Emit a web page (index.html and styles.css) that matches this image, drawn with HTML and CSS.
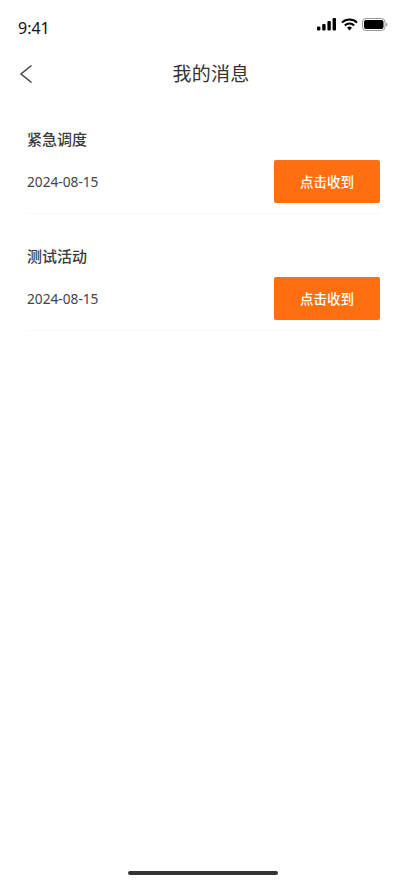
FILE: index.html
```html
<!DOCTYPE html>
<html lang="zh-CN">

<head>
    <meta charset="UTF-8">
    <meta name="viewport" content="width=device-width, initial-scale=1.0">
    <title>我的消息</title>

    <link rel="stylesheet" href="styles.css">
</head>

<body>
    <div class="page">
        <div class="status">
            <span class="time">9:41</span>
            <div class="status-icons">
                <svg width="20" height="13" viewBox="0 0 20 13">
                    <rect x="0" y="8.5" width="3.4" height="4" rx="1" fill="#000" />
                    <rect x="5.2" y="6" width="3.4" height="6.5" rx="1" fill="#000" />
                    <rect x="10.4" y="3" width="3.4" height="9.500" rx="1" fill="#000" />
                    <rect x="15.6" y="0" width="3.4" height="12.500" rx="1" fill="#000" />
                </svg>
                <svg width="17" height="13" viewBox="0 0 17 13">
                    <path d="M1 4.600a10.800 10.800 0 0 1 15 0" fill="none" stroke="#000" stroke-width="2" />
                    <path d="M3.800 7.500a6.800 6.800 0 0 1 9.400 0" fill="none" stroke="#000" stroke-width="2" />
                    <path d="M6 9.700a3.500 3.500 0 0 1 5 0L8.500 12.500z" fill="#000" />
                </svg>
                <svg width="26" height="13" viewBox="0 0 26 13">
                    <rect x="0.500" y="0.500" width="22.500" height="12" rx="3.500" fill="none" stroke="#999" />
                    <rect x="2" y="2" width="19.500" height="9" rx="2" fill="#000" />
                    <path d="M24 4.500c1 .3 1.500 1 1.500 2s-.5 1.700-1.500 2z" fill="#aaa" />
                </svg>
            </div>
        </div>

        <div class="nav">
            <svg class="back" width="14" height="20" viewBox="0 0 14 20">
                <path d="M12.500 1.500L2 10l10.500 8.500" fill="none" stroke="#444" stroke-width="1.500" />
            </svg>
            <h1 class="nav-title">我的消息</h1>
        </div>

        <ul class="list">
            <li class="item">
                <div class="item-title">紧急调度</div>
                <div class="item-row">
                    <span class="item-date">2024-08-15</span>
                    <button class="btn">点击收到</button>
                </div>
            </li>
            <li class="item">
                <div class="item-title">测试活动</div>
                <div class="item-row">
                    <span class="item-date">2024-08-15</span>
                    <button class="btn">点击收到</button>
                </div>
            </li>
        </ul>

        <div class="home-bar"></div>
    </div>
</body>

</html>
```

FILE: styles.css
```css
* {
    margin: 0;
    padding: 0;
    list-style: none;
    box-sizing: border-box;
}

body {
    background: #fff;
    font-family: "Noto Sans", "Noto Sans CJK SC", sans-serif;
}

.page {
    display: flex;
    flex-direction: column;
    height: 883px;
}

.status {
    display: flex;
    justify-content: space-between;
    align-items: center;
    height: 28px;
    margin-top: 14px;
    padding: 0 18px 0 18px;
}

.time {
    font-size: 16px;
    color: #111;
    line-height: 28px;
}

.status-icons {
    display: flex;
    align-items: center;
    gap: 4px;
    margin-bottom: 7px;
}

.nav {
    position: relative;
    display: flex;
    justify-content: center;
    align-items: center;
    height: 38px;
    margin-top: 12px;
    padding: 0 0 2px 16px;
}

.back {
    position: absolute;
    left: 19px;
    top: 10px;
}

.nav-title {
    font-family: "Noto Sans CJK SC", sans-serif;
    font-size: 19px;
    font-weight: 400;
    color: #333;
    letter-spacing: 0.2px;
}

.list {
    flex: 1;
    padding: 0 26px 0 27px;
    margin-top: 5px;
}

.item {
    height: 117px;
    border-bottom: 1px solid #f7f7f7;
    padding-top: 30px;
}

.item-title {
    font-family: "Noto Sans CJK SC", sans-serif;
    font-size: 15px;
    font-weight: 500;
    color: #3a3a3a;
    line-height: 24px;
}

.item-row {
    display: flex;
    justify-content: space-between;
    align-items: center;
    margin-top: 9px;
}

.item-date {
    font-size: 13.700px;
    color: #444;
}

.btn {
    width: 106px;
    height: 43px;
    padding-bottom: 2px;
    border: none;
    border-radius: 2px;
    background: #ff6f0f;
    color: #fff;
    font-family: "Noto Sans CJK SC", sans-serif;
    font-size: 13.500px;
    font-weight: 500;
}

.home-bar {
    width: 150px;
    height: 4px;
    margin: 0 auto 8px;
    border-radius: 2px;
    background: #333;
}
```
